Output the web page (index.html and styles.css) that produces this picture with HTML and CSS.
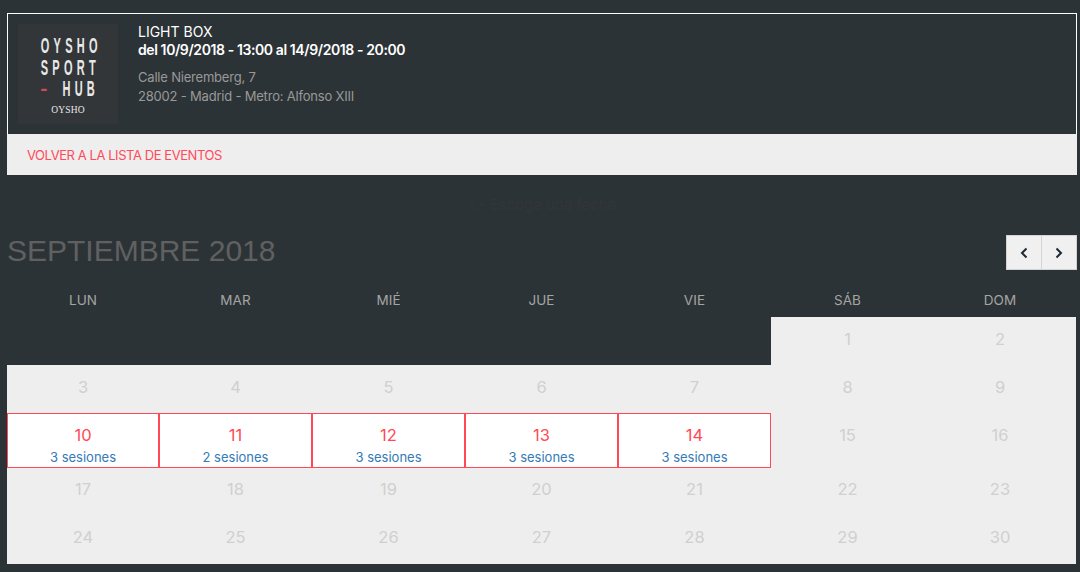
FILE: index.html
```html
<!DOCTYPE html>
<html lang="es">
<head>
<meta charset="utf-8">
<title>Light Box</title>
<link rel="stylesheet" href="styles.css">
</head>
<body>
<main class="page">
  <section class="event">
    <div class="logo">
      <div class="logo-line">OYSHO</div>
      <div class="logo-line">SPORT</div>
      <div class="logo-line"><span class="dash">–</span> HUB</div>
      <div class="logo-brand">OYSHO</div>
    </div>
    <div class="info">
      <div class="name">LIGHT BOX</div>
      <div class="dates">del 10/9/2018 - 13:00 al 14/9/2018 - 20:00</div>
      <div class="addr">Calle Nieremberg, 7</div>
      <div class="addr">28002 - Madrid - Metro: Alfonso XIII</div>
    </div>
  </section>
  <nav class="back"><a href="#">VOLVER A LA LISTA DE EVENTOS</a></nav>
  <h2 class="step">1.- Escoge una fecha</h2>
  <div class="cal-head">
    <h1 class="month">SEPTIEMBRE 2018</h1>
    <div class="btns">
      <button class="btn" aria-label="Anterior"><svg width="8" height="12" viewBox="0 0 8 12"><path d="M6.5 1.5 2 6l4.5 4.5" fill="none" stroke="#1d2a33" stroke-width="2"/></svg></button>
      <button class="btn" aria-label="Siguiente"><svg width="8" height="12" viewBox="0 0 8 12"><path d="M1.5 1.5 6 6l-4.5 4.5" fill="none" stroke="#1d2a33" stroke-width="2"/></svg></button>
    </div>
  </div>
  <div class="grid">
    <div class="dow">LUN</div><div class="dow">MAR</div><div class="dow">MIÉ</div><div class="dow">JUE</div><div class="dow">VIE</div><div class="dow">SÁB</div><div class="dow">DOM</div>
    <div class="blank"></div><div class="blank"></div><div class="blank"></div><div class="blank"></div><div class="blank"></div>
    <div class="day">1</div><div class="day">2</div>
    <div class="day">3</div><div class="day">4</div><div class="day">5</div><div class="day">6</div><div class="day">7</div><div class="day">8</div><div class="day">9</div>
    <a class="day on" href="#"><span class="num">10</span><span class="ses">3 sesiones</span></a>
    <a class="day on" href="#"><span class="num">11</span><span class="ses">2 sesiones</span></a>
    <a class="day on" href="#"><span class="num">12</span><span class="ses">3 sesiones</span></a>
    <a class="day on" href="#"><span class="num">13</span><span class="ses">3 sesiones</span></a>
    <a class="day on" href="#"><span class="num">14</span><span class="ses">3 sesiones</span></a>
    <div class="day">15</div><div class="day">16</div>
    <div class="day low">17</div><div class="day low">18</div><div class="day low">19</div><div class="day low">20</div><div class="day low">21</div><div class="day low">22</div><div class="day low">23</div>
    <div class="day low">24</div><div class="day low">25</div><div class="day low">26</div><div class="day low">27</div><div class="day low">28</div><div class="day low">29</div><div class="day low">30</div>
  </div>
</main>
</body>
</html>
```
FILE: styles.css
```css
* { box-sizing: border-box; }
html, body { margin: 0; padding: 0; }
body {
  background: #2c3336;
  font-family: "Inter", "Liberation Sans", sans-serif;
  color: #999;
  height: 572px;
  overflow: hidden;
}
.page { padding: 13px 3px 0 7px; }
.event {
  height: 121px;
  border: 1px solid #fff;
  border-bottom: 0;
  padding: 10px;
  display: flex;
  gap: 20px;
}
.logo {
  width: 100px;
  height: 100px;
  background: #333638;
  color: #e8e8e8;
  text-align: center;
  padding-top: 11px;
  overflow: hidden;
}
.logo-line {
  font-family: "Liberation Sans", sans-serif;
  font-size: 22px;
  line-height: 21.5px;
  letter-spacing: 8.5px;
  margin-right: 9px;
  transform: scaleX(.5);
  font-weight: 700;
  white-space: nowrap;
}
.dash { color: #d9465a; margin-right: 8px; }
.logo-brand {
  font-family: "Liberation Serif", serif;
  font-size: 9.5px;
  line-height: 11px;
  letter-spacing: .2px;
  margin-top: 5px;
}
.name { color: #fff; font-size: 14px; line-height: 17px; margin-top: -1px; }
.dates { color: #fff; font-size: 14px; line-height: 19px; font-weight: 600; letter-spacing: -.4px; }
.addr { color: #999; font-size: 13px; line-height: 19px; letter-spacing: -.2px; }
.dates + .addr { margin-top: 9px; }
.back {
  height: 41px;
  background: #eee;
  padding-left: 20px;
  display: flex;
  align-items: center;
}
.back a { color: #ff4a5a; font-size: 13px; text-decoration: none; letter-spacing: -.43px; }
.step {
  margin: 0;
  height: 60px;
  font-size: 15px;
  font-weight: 400;
  line-height: 60px;
  color: #333538;
  text-align: center;
}
.cal-head {
  display: flex;
  justify-content: space-between;
  align-items: flex-start;
  height: 49px;
}
.month {
  margin: 0;
  font-family: "Liberation Sans", sans-serif;
  font-size: 30px;
  line-height: 32px;
  font-weight: 400;
  color: #606060;
}
.btns { display: flex; }
.btn {
  width: 36px;
  height: 35px;
  padding: 0;
  background: #f0f0f0;
  border: 1px solid #d4d4d4;
  display: flex;
  align-items: center;
  justify-content: center;
}
.btn + .btn { margin-left: -1px; }
.grid {
  display: grid;
  grid-template-columns: 152px repeat(5, 153px) 152px;
  grid-template-rows: 33px 48px 48px 55px 48px 48px;
}
.dow { font-size: 13.5px; color: #a4a4a4; text-align: center; line-height: 32px; letter-spacing: .1px; }
.day {
  background: #eee;
  color: #d0d0d0;
  font-size: 16.5px;
  text-align: center;
  line-height: 45px;
  text-decoration: none;
}
.day.low { line-height: 43px; }
.day.on {
  background: #fff;
  border: 1px solid #ff4a55;
  display: flex;
  flex-direction: column;
  align-items: center;
  padding-top: 11px;
}
.num { color: #ff4a55; font-size: 16.5px; line-height: 20px; }
.ses { color: #337ab7; font-size: 13px; line-height: 18px; margin-top: 3px; }
```
